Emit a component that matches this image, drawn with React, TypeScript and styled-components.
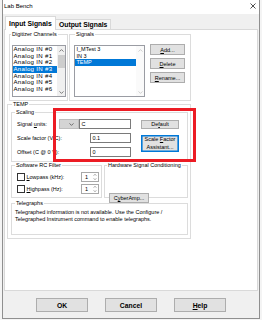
import React from "react";
import styled, { createGlobalStyle } from "styled-components";

const FONT = `"Liberation Sans", Arial, sans-serif`;

const GlobalStyle = createGlobalStyle`
  *, *::before, *::after { box-sizing: border-box; }
  html, body { margin: 0; padding: 0; }
  body {
    width: 262px;
    height: 320px;
    overflow: hidden;
    background: #f4f4f4;
    font-family: ${FONT};
    color: #000;
  }
  button { font-family: inherit; color: #000; }
`;

const Window = styled.div`
  position: relative;
  margin-left: 2px;
  width: 258px;
  height: 319px;
  border: 1px solid #8f8f8f;
  border-top: none;
  background: #f0f0f0;
  display: flex;
  flex-direction: column;
`;

const TitleBar = styled.div`
  flex: none;
  height: 14px;
  background: #fff;
  display: flex;
  align-items: center;
  justify-content: space-between;
  padding: 0 3px 1.5px 1px;
`;

const Title = styled.span`
  font-size: 6px;
  line-height: 6px;
  white-space: nowrap;
`;

const Body = styled.div`
  flex: 1;
  display: flex;
  flex-direction: column;
  padding: 2px 1px 0 1px;
`;

const TabRow = styled.div`
  position: relative;
  z-index: 1;
  display: flex;
  align-items: flex-end;
  height: 14px;
  margin: 0 0 -1px 1px;
`;

const Tab = styled.div<{ $active?: boolean }>`
  position: relative;
  z-index: ${(p) => (p.$active ? 2 : 1)};
  width: ${(p) => (p.$active ? 51 : 56)}px;
  height: ${(p) => (p.$active ? 14 : 11)}px;
  margin-left: ${(p) => (p.$active ? 0 : -1)}px;
  padding-left: 3px;
  display: flex;
  align-items: center;
  background: ${(p) => (p.$active ? "#fff" : "#f6f6f6")};
  border: 1px solid #d9d9d9;
  border-bottom: ${(p) => (p.$active ? "none" : "1px solid #d9d9d9")};
  font-size: 6.8px;
  font-weight: bold;
  white-space: nowrap;
`;

const Panel = styled.div`
  height: 262px;
  background: #fff;
  border: 1px solid #d9d9d9;
  padding: 1px 2px 0 2px;
  display: flex;
  flex-direction: column;
`;

const TopRow = styled.div`
  display: flex;
  gap: 1px;
  margin-left: 2px;
`;

const Group = styled.fieldset`
  margin: 0;
  padding: 0;
  min-width: 0;
  border: 1px solid #dcdcdc;
`;

const Legend = styled.legend<{ $x: number }>`
  margin-left: ${(p) => p.$x}px;
  padding: 0 1px;
  font-size: 5.5px;
  line-height: 6px;
  white-space: nowrap;
`;

const DigitizerGroup = styled(Group)`
  width: 59px;
  height: 70px;
`;

const SignalsGroup = styled(Group)`
  width: 122px;
  height: 70px;
`;

const DigitizerBody = styled.div`
  padding: 8px 0 0 2px;
`;

const SignalsBody = styled.div`
  display: flex;
  gap: 5px;
  padding: 7px 0 0 4px;
`;

const ListBox = styled.div<{ $w: number }>`
  flex: none;
  width: ${(p) => p.$w}px;
  height: 52px;
  margin-top: ${(p) => (p.$w > 60 ? 1 : 0)}px;
  border: 1px solid #9a9ca3;
  background: #fff;
  display: flex;
`;

const ListItems = styled.div<{ $font: number; $indent: number; $spacing: number }>`
  flex: 1;
  min-width: 0;
  overflow: hidden;
  font-size: ${(p) => p.$font}px;
  letter-spacing: ${(p) => p.$spacing}px;
  & > div {
    padding-left: ${(p) => p.$indent}px;
  }
`;

const ListItem = styled.div<{ $selected?: boolean }>`
  height: 6.67px;
  line-height: 6.67px;
  white-space: nowrap;
  background: ${(p) => (p.$selected ? "#0078d7" : "transparent")};
  color: ${(p) => (p.$selected ? "#fff" : "#000")};
`;

const ScrollBar = styled.div<{ $disabled?: boolean }>`
  flex: none;
  width: 8px;
  display: flex;
  flex-direction: column;
  background: ${(p) => (p.$disabled ? "#fafafa" : "#f0f0f0")};
`;

const ScrollArrow = styled.div`
  height: 8px;
  display: flex;
  align-items: center;
  justify-content: center;
`;

const ScrollTrack = styled.div`
  flex: 1;
  padding-top: 1px;
`;

const ScrollThumb = styled.div`
  height: 13px;
  margin: 0 0.5px;
  background: #cdcdcd;
`;

const ButtonColumn = styled.div`
  display: flex;
  flex-direction: column;
  gap: 3px;
`;

const SmallButton = styled.button<{ $w: number; $h: number }>`
  width: ${(p) => p.$w}px;
  height: ${(p) => p.$h}px;
  padding: 0;
  background: #e1e1e1;
  border: 1px solid #adadad;
  font-size: 5.5px;
  line-height: 6px;
  text-align: center;
  white-space: nowrap;
`;

const FocusButton = styled(SmallButton)`
  border-color: #0078d7;
  box-shadow: inset 0 0 0 0.6px #0078d7;
  line-height: 7.5px;
  white-space: normal;
`;

const TempGroup = styled(Group)`
  position: relative;
  width: 184px;
`;

const TempBody = styled.div`
  padding: 2px 2px 3px 3px;
`;

const ScalingGroup = styled(Group)`
  width: 177px;
  height: 53px;
`;

const ScalingGrid = styled.div`
  display: grid;
  grid-template-columns: 42px 20px 52px 48px;
  grid-template-rows: 10px 10px 10px;
  row-gap: 4px;
  padding: 4px 0 0 5px;
  font-size: 5.5px;
  align-items: center;
`;

const FieldLabel = styled.span`
  white-space: nowrap;
`;

const Combo = styled.div`
  height: 10px;
  background: #d4d4d4;
  border: 1px solid #bdbdbd;
  display: flex;
  align-items: center;
  justify-content: flex-end;
  padding-right: 4px;
`;

const TextField = styled.div<{ $wide?: boolean }>`
  height: 10px;
  width: ${(p) => (p.$wide ? 52 : 41)}px;
  justify-self: end;
  grid-column: ${(p) => (p.$wide ? "3" : "2 / 4")};
  background: #fff;
  border: 1px solid #7a7a7a;
  padding-left: 1.5px;
  display: flex;
  align-items: center;
  font-size: 5.5px;
`;

const DefaultButton = styled(SmallButton)`
  justify-self: end;
`;

const AssistButton = styled(FocusButton)`
  grid-column: 4;
  grid-row: 2 / span 2;
  justify-self: end;
  align-self: start;
  margin-top: 2px;
`;

const FilterRowWrap = styled.div`
  display: flex;
  gap: 2px;
`;

const FilterGroup = styled(Group)`
  width: 91px;
  height: 36px;
`;

const HardwareGroup = styled(Group)`
  width: 84px;
  height: 36px;
`;

const FilterBody = styled.div`
  display: grid;
  grid-template-columns: 8px 56px 18px;
  grid-auto-rows: 10px;
  row-gap: 2px;
  align-items: center;
  padding: 4px 0 0 5px;
  font-size: 5.5px;
`;

const Check = styled.span`
  width: 8px;
  height: 8px;
  border: 1px solid #333;
  background: #fff;
`;

const CheckLabel = styled.span`
  padding-left: 1.5px;
  white-space: nowrap;
`;

const Spinner = styled.div`
  height: 10px;
  background: #fff;
  border: 1px solid #a8a8a8;
  display: flex;
  align-items: center;
`;

const SpinValue = styled.span`
  flex: 1;
  padding-left: 3px;
`;

const SpinArrows = styled.div`
  width: 6px;
  display: flex;
  flex-direction: column;
  align-items: center;
  gap: 1.5px;
`;

const HardwareBody = styled.div`
  padding: 18px 0 0 4px;
`;

const TelegraphGroup = styled(Group)`
  width: 177px;
  height: 35px;
  margin-top: 2px;
`;

const TelegraphText = styled.div`
  padding: 2.5px 0 0 3px;
  font-size: 5.5px;
  line-height: 7px;
  white-space: nowrap;
`;

const DialogButtons = styled.div`
  display: flex;
  gap: 17px;
  margin: 7px 0 0 32px;
`;

const DialogButton = styled.button`
  width: 52px;
  height: 14px;
  padding: 0;
  background: #e1e1e1;
  border: 1px solid #adadad;
  font-size: 6.8px;
  font-weight: bold;
`;

const Annotation = styled.div`
  position: absolute;
  left: 50px;
  top: 108px;
  width: 143px;
  height: 54px;
  border: 3px solid #ec1c24;
  pointer-events: none;
`;

const U = styled.span`
  text-decoration: underline;
  text-decoration-thickness: 0.5px;
  text-underline-offset: 0.8px;
`;

const Chevron = ({ dir, color }: { dir: "up" | "down"; color: string }) => (
  <svg width="5" height="3" viewBox="0 0 5 3">
    <polyline
      points={dir === "up" ? "0.5,2.6 2.5,0.6 4.5,2.6" : "0.5,0.4 2.5,2.4 4.5,0.4"}
      fill="none"
      stroke={color}
      strokeWidth="0.8"
    />
  </svg>
);

const TinyArrow = ({ dir }: { dir: "up" | "down" }) => (
  <svg width="4" height="2" viewBox="0 0 4 2">
    <polyline
      points={dir === "up" ? "0.4,1.8 2,0.3 3.6,1.8" : "0.4,0.2 2,1.7 3.6,0.2"}
      fill="none"
      stroke="#8a8a8a"
      strokeWidth="0.7"
    />
  </svg>
);

const CloseIcon = () => (
  <svg width="6" height="6" viewBox="0 0 6 6">
    <path d="M0.5 0.5 L5.5 5.5 M5.5 0.5 L0.5 5.5" stroke="#222" strokeWidth="0.8" />
  </svg>
);

const digitizer = [
  "Analog IN #0",
  "Analog IN #1",
  "Analog IN #2",
  "Analog IN #3",
  "Analog IN #4",
  "Analog IN #5",
  "Analog IN #6",
];
const signals = ["I_MTest 3", "IN 3", "TEMP"];

export default function App() {
  return (
    <>
      <GlobalStyle />
      <Window>
        <TitleBar>
          <Title>Lab Bench</Title>
          <CloseIcon />
        </TitleBar>
        <Body>
          <TabRow>
            <Tab $active>Input Signals</Tab>
            <Tab>Output Signals</Tab>
          </TabRow>
          <Panel>
            <TopRow>
              <DigitizerGroup>
                <Legend $x={1}>Digitizer Channels</Legend>
                <DigitizerBody>
                  <ListBox $w={54}>
                    <ListItems $font={6.1} $indent={0.5} $spacing={0.3}>
                      {digitizer.map((d) => (
                        <ListItem key={d} $selected={d === "Analog IN #3"}>
                          {d}
                        </ListItem>
                      ))}
                    </ListItems>
                    <ScrollBar>
                      <ScrollArrow>
                        <Chevron dir="up" color="#606060" />
                      </ScrollArrow>
                      <ScrollTrack>
                        <ScrollThumb />
                      </ScrollTrack>
                      <ScrollArrow>
                        <Chevron dir="down" color="#606060" />
                      </ScrollArrow>
                    </ScrollBar>
                  </ListBox>
                </DigitizerBody>
              </DigitizerGroup>
              <SignalsGroup>
                <Legend $x={5}>Signals</Legend>
                <SignalsBody>
                  <ListBox $w={71}>
                    <ListItems $font={5.5} $indent={1.5} $spacing={0}>
                      {signals.map((s) => (
                        <ListItem key={s} $selected={s === "TEMP"}>
                          {s}
                        </ListItem>
                      ))}
                    </ListItems>
                    <ScrollBar $disabled>
                      <ScrollArrow>
                        <Chevron dir="up" color="#c4c4c4" />
                      </ScrollArrow>
                      <ScrollTrack />
                      <ScrollArrow>
                        <Chevron dir="down" color="#c4c4c4" />
                      </ScrollArrow>
                    </ScrollBar>
                  </ListBox>
                  <ButtonColumn>
                    <SmallButton $w={35} $h={11}>
                      <U>A</U>dd...
                    </SmallButton>
                    <SmallButton $w={35} $h={11}>
                      <U>D</U>elete
                    </SmallButton>
                    <SmallButton $w={35} $h={11}>
                      <U>R</U>ename...
                    </SmallButton>
                  </ButtonColumn>
                </SignalsBody>
              </SignalsGroup>
            </TopRow>

            <TempGroup>
              <Legend $x={4}>TEMP</Legend>
              <TempBody>
                <ScalingGroup>
                  <Legend $x={3}>Scaling</Legend>
                  <ScalingGrid>
                    <FieldLabel>
                      Signal <U>u</U>nits:
                    </FieldLabel>
                    <Combo>
                      <Chevron dir="down" color="#555" />
                    </Combo>
                    <TextField $wide>C</TextField>
                    <DefaultButton $w={38} $h={9}>
                      De<U>f</U>ault
                    </DefaultButton>

                    <FieldLabel>Scale factor (V/C):</FieldLabel>
                    <TextField>0.1</TextField>
                    <AssistButton $w={38} $h={17}>
                      Scale <U>F</U>actor
                      <br />
                      Assistant...
                    </AssistButton>

                    <FieldLabel>Offset (C @ 0 V):</FieldLabel>
                    <TextField>0</TextField>
                  </ScalingGrid>
                </ScalingGroup>

                <FilterRowWrap>
                  <FilterGroup>
                    <Legend $x={3}>Software RC Filter</Legend>
                    <FilterBody>
                      <Check />
                      <CheckLabel>
                        <U>L</U>owpass (kHz):
                      </CheckLabel>
                      <Spinner>
                        <SpinValue>1</SpinValue>
                        <SpinArrows>
                          <TinyArrow dir="up" />
                          <TinyArrow dir="down" />
                        </SpinArrows>
                      </Spinner>
                      <Check />
                      <CheckLabel>
                        <U>H</U>ighpass (Hz):
                      </CheckLabel>
                      <Spinner>
                        <SpinValue>1</SpinValue>
                        <SpinArrows>
                          <TinyArrow dir="up" />
                          <TinyArrow dir="down" />
                        </SpinArrows>
                      </Spinner>
                    </FilterBody>
                  </FilterGroup>
                  <HardwareGroup>
                    <Legend $x={2}>Hardware Signal Conditioning</Legend>
                    <HardwareBody>
                      <SmallButton $w={40} $h={10}>
                        C<U>y</U>berAmp...
                      </SmallButton>
                    </HardwareBody>
                  </HardwareGroup>
                </FilterRowWrap>

                <TelegraphGroup>
                  <Legend $x={3}>Telegraphs</Legend>
                  <TelegraphText>
                    Telegraphed information is not available. Use the Configure /
                    <br />
                    Telegraphed Instrument command to enable telegraphs.
                  </TelegraphText>
                </TelegraphGroup>
              </TempBody>
            </TempGroup>
          </Panel>

          <DialogButtons>
            <DialogButton>OK</DialogButton>
            <DialogButton>Cancel</DialogButton>
            <DialogButton>
              <U>H</U>elp
            </DialogButton>
          </DialogButtons>
        </Body>
        <Annotation />
      </Window>
    </>
  );
}
